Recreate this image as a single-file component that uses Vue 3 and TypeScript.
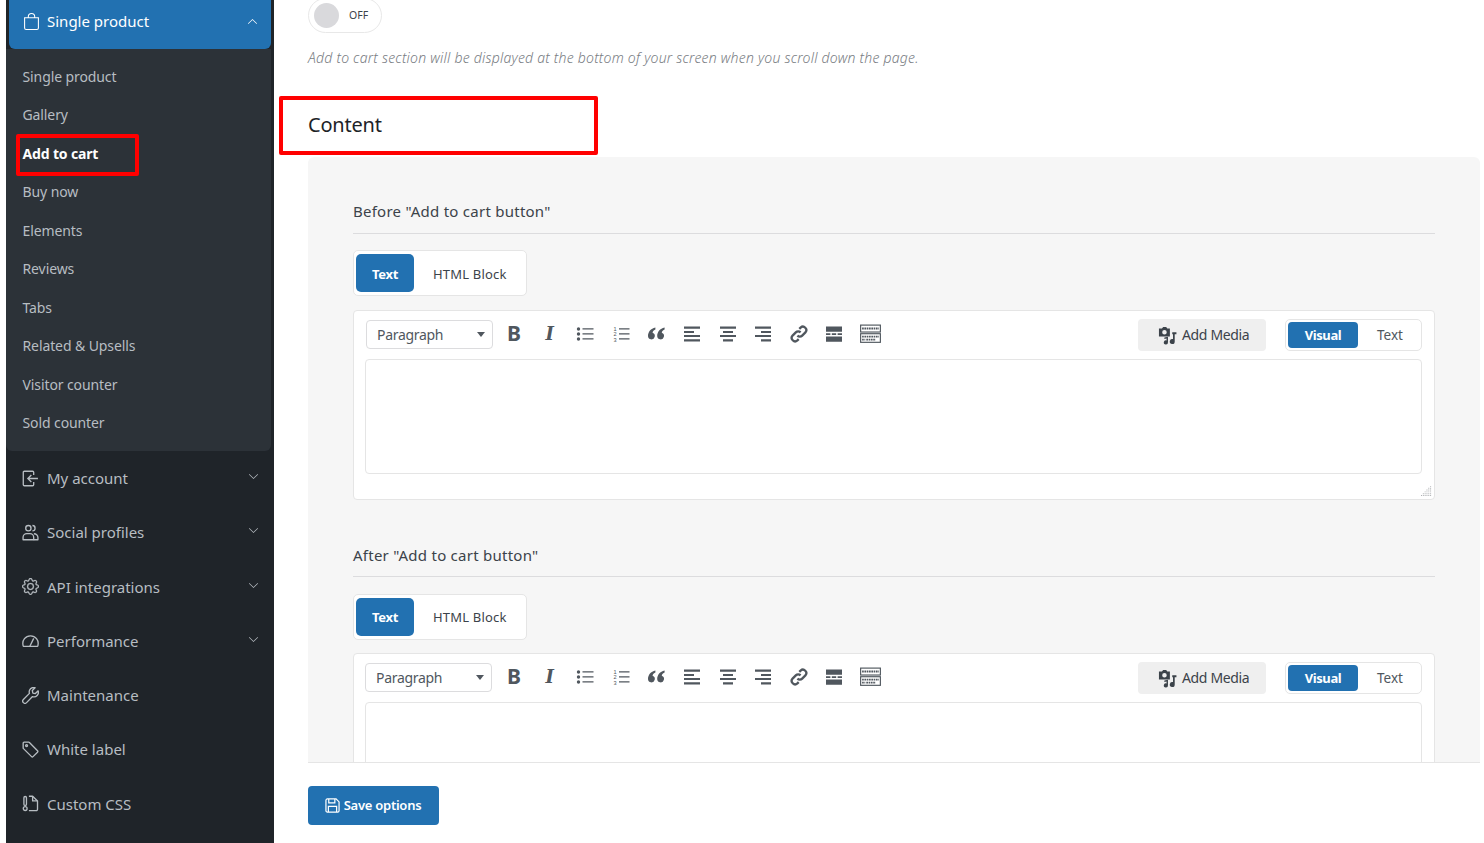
<script setup lang="ts">
const subItems = ['Single product', 'Gallery', 'Add to cart', 'Buy now', 'Elements', 'Reviews', 'Tabs', 'Related & Upsells', 'Visitor counter', 'Sold counter']
const mainItems = [
  { label: 'My account', icon: 'account', chevron: true },
  { label: 'Social profiles', icon: 'people', chevron: true },
  { label: 'API integrations', icon: 'gear', chevron: true },
  { label: 'Performance', icon: 'speed', chevron: true },
  { label: 'Maintenance', icon: 'wrench', chevron: false },
  { label: 'White label', icon: 'tag', chevron: false },
  { label: 'Custom CSS', icon: 'css', chevron: false },
]
const sections = ['Before "Add to cart button"', 'After "Add to cart button"']
</script>

<template>
  <div class="page">
    <aside class="sidebar">
      <div class="head">
        <svg class="ico" viewBox="0 0 16 16" fill="currentColor"><path d="M8 1a2.5 2.5 0 0 1 2.5 2.5V4h-5v-.5A2.5 2.5 0 0 1 8 1zm3.5 3v-.5a3.5 3.5 0 1 0-7 0V4H1v10a2 2 0 0 0 2 2h10a2 2 0 0 0 2-2V4h-3.5zM2 5h12v9a1 1 0 0 1-1 1H3a1 1 0 0 1-1-1V5z" /></svg>
        <span class="head-label">Single product</span>
        <svg class="chev" viewBox="0 0 16 16" fill="currentColor"><path d="M7.646 4.646a.5.5 0 0 1 .708 0l6 6a.5.5 0 0 1-.708.708L8 5.707l-5.646 5.647a.5.5 0 0 1-.708-.708l6-6z" /></svg>
      </div>
      <ul class="sub">
        <li v-for="s in subItems" :key="s" :class="{ active: s === 'Add to cart' }">{{ s }}</li>
      </ul>
      <div v-for="m in mainItems" :key="m.label" class="item">
        <svg v-if="m.icon === 'account'" class="ico" viewBox="0 0 16 16" fill="none" stroke="currentColor" stroke-width="1.25"><path d="M11 4.6V2.2a1 1 0 0 0-1-1H2.2a1 1 0 0 0-1 1v11.6a1 1 0 0 0 1 1H10a1 1 0 0 0 1-1v-2.4" /><path d="M15 8H5.5M8.8 4.7 5.5 8l3.3 3.3" /></svg>
        <svg v-else-if="m.icon === 'people'" class="ico" viewBox="0 0 16 16" fill="none" stroke="currentColor" stroke-width="1.25" stroke-linejoin="round"><circle cx="6" cy="3.9" r="2.5" /><path d="M9.8 1.4a2.5 2.5 0 1 1 0 5" /><path d="M1 14.8v-2.3A3.5 3.5 0 0 1 4.5 9h3a3.5 3.5 0 0 1 3.5 3.5v2.3z" /><path d="M11.2 9.2A3.6 3.6 0 0 1 15 12.7v2.1h-4" /></svg>
        <svg v-else-if="m.icon === 'gear'" class="ico" viewBox="0 0 16 16" fill="currentColor" stroke="currentColor" stroke-width=".2"><path d="M8 4.754a3.246 3.246 0 1 0 0 6.492 3.246 3.246 0 0 0 0-6.492zM5.754 8a2.246 2.246 0 1 1 4.492 0 2.246 2.246 0 0 1-4.492 0z" /><path d="M9.796 1.343c-.527-1.79-3.065-1.79-3.592 0l-.094.319a.873.873 0 0 1-1.255.52l-.292-.16c-1.64-.892-3.433.902-2.54 2.541l.159.292a.873.873 0 0 1-.52 1.255l-.319.094c-1.79.527-1.79 3.065 0 3.592l.319.094a.873.873 0 0 1 .52 1.255l-.16.292c-.892 1.64.901 3.434 2.541 2.54l.292-.159a.873.873 0 0 1 1.255.52l.094.319c.527 1.79 3.065 1.79 3.592 0l.094-.319a.873.873 0 0 1 1.255-.52l.292.16c1.64.893 3.434-.902 2.54-2.541l-.159-.292a.873.873 0 0 1 .52-1.255l.319-.094c1.79-.527 1.79-3.065 0-3.592l-.319-.094a.873.873 0 0 1-.52-1.255l.16-.292c.893-1.64-.902-3.433-2.541-2.54l-.292.159a.873.873 0 0 1-1.255-.52l-.094-.319zm-2.633.283c.246-.835 1.428-.835 1.674 0l.094.319a1.873 1.873 0 0 0 2.693 1.115l.291-.16c.764-.415 1.6.42 1.184 1.185l-.159.292a1.873 1.873 0 0 0 1.116 2.692l.318.094c.835.246.835 1.428 0 1.674l-.319.094a1.873 1.873 0 0 0-1.115 2.693l.16.291c.415.764-.42 1.6-1.185 1.184l-.291-.159a1.873 1.873 0 0 0-2.693 1.116l-.094.318c-.246.835-1.428.835-1.674 0l-.094-.319a1.873 1.873 0 0 0-2.692-1.115l-.292.16c-.764.415-1.6-.42-1.184-1.185l.159-.291A1.873 1.873 0 0 0 1.945 8.93l-.319-.094c-.835-.246-.835-1.428 0-1.674l.319-.094A1.873 1.873 0 0 0 3.06 4.377l-.16-.292c-.415-.764.42-1.6 1.185-1.184l.292.159a1.873 1.873 0 0 0 2.692-1.115l.094-.319z" /></svg>
        <svg v-else-if="m.icon === 'speed'" class="ico" viewBox="0 0 16 16" fill="none" stroke="currentColor" stroke-width="1.25"><path d="M2 13.6h12a1 1 0 0 0 1-1.2A7.1 7.1 0 0 0 8 3.6a7.1 7.1 0 0 0-7 8.8 1 1 0 0 0 1 1.2z" /><path d="M7.4 13.4 11 6" /></svg>
        <svg v-else-if="m.icon === 'wrench'" class="ico" viewBox="0 0 16 16" fill="none" stroke="currentColor" stroke-width="1.25" stroke-linejoin="round"><path d="M15.2 3.6 12.6 6.2l-2.4-.5-.5-2.4 2.6-2.6a4.2 4.2 0 0 0-5.3 5.3L1.3 11.7a2.1 2.1 0 1 0 3 3L9.9 9a4.2 4.2 0 0 0 5.3-5.4z" /></svg>
        <svg v-else-if="m.icon === 'tag'" class="ico" viewBox="0 0 16 16" fill="none" stroke="currentColor" stroke-width="1.25" stroke-linejoin="round"><path d="M1.1 2.2v4.3a1 1 0 0 0 .3.7l7.6 7.5a1 1 0 0 0 1.4 0l4.2-4.2a1 1 0 0 0 0-1.4L7 1.4a1 1 0 0 0-.7-.3H2.2a1 1 0 0 0-1.1 1.1z" /><circle cx="4.3" cy="4.3" r=".9" /></svg>
        <svg v-else class="ico" viewBox="0 0 16 16" fill="none" stroke="currentColor" stroke-width="1.25" stroke-linejoin="round"><path d="M6.5 1.2H10l4.6 4.4v7.9a1.2 1.2 0 0 1-1.2 1.2H6.5" /><path d="M10 1.2v4.4h4.6" /><rect x="1.8" y="1.4" width="2.4" height="8.4" rx="1.2" /><circle cx="3" cy="12.8" r="1.8" /></svg>
        <span class="label">{{ m.label }}</span>
        <svg v-if="m.chevron" class="chev" viewBox="0 0 16 16" fill="currentColor"><path d="M1.646 4.646a.5.5 0 0 1 .708 0L8 10.293l5.646-5.647a.5.5 0 0 1 .708.708l-6 6a.5.5 0 0 1-.708 0l-6-6a.5.5 0 0 1 0-.708z" /></svg>
      </div>
      <div class="mark mark-side"></div>
    </aside>

    <main class="main">
      <div class="toggle"><span class="knob"></span><span class="off">OFF</span></div>
      <p class="desc">Add to cart section will be displayed at the bottom of your screen when you scroll down the page.</p>
      <h2 class="title">Content</h2>
      <div class="panel">
        <section v-for="sec in sections" :key="sec" class="sec">
          <h3 class="sec-title">{{ sec }}</h3>
          <div class="tabs">
            <span class="tab on">Text</span>
            <span class="tab">HTML Block</span>
          </div>
          <div class="editor">
            <div class="bar">
              <div class="select"><span>Paragraph</span><i class="caret"></i></div>
              <span class="t-b tool">B</span>
              <span class="t-i tool">I</span>
              <svg class="tool" viewBox="0 0 20 20" fill="#50575e"><circle cx="3.5" cy="5" r="1.7" /><circle cx="3.5" cy="10" r="1.7" /><circle cx="3.5" cy="15" r="1.7" /><path d="M7.5 4.3h11v1.3h-11zM7.5 9.3h11v1.3h-11zM7.5 14.3h11v1.3h-11z" /></svg>
              <svg class="tool" viewBox="0 0 20 20" fill="#50575e"><path d="M8 4.3h10.5v1.3H8zM8 9.3h10.5v1.3H8zM8 14.3h10.5v1.3H8z" /><text x="2.6" y="7.4" font-size="5.6" font-family="Liberation Sans">1</text><text x="2.4" y="12.4" font-size="5.6" font-family="Liberation Sans">2</text><text x="2.4" y="17.6" font-size="5.6" font-family="Liberation Sans">3</text></svg>
              <svg class="tool" viewBox="0 0 20 20" fill="#50575e"><path d="M9.4 3.4v2C7.4 6.2 6.6 7.5 6.6 8.8a3.4 3.4 0 1 1-4.6 3.2C2 7.8 4.8 4.4 9.4 3.4zM18.6 3.4v2c-2 .8-2.8 2.1-2.8 3.4a3.4 3.4 0 1 1-4.6 3.2c0-4.2 2.8-7.6 7.4-8.6z" /></svg>
              <svg class="tool" viewBox="0 0 20 20" fill="#50575e"><path d="M2 2.5h16v2.2H2zM2 7h10v2H2zM2 11h16v2H2zM2 15.3h16v2.2H2z" /></svg>
              <svg class="tool" viewBox="0 0 20 20" fill="#50575e"><path d="M2 2.5h16v2.2H2zM5 7h10v2H5zM2 11h16v2H2zM5 15.3h10v2.2H5z" /></svg>
              <svg class="tool" viewBox="0 0 20 20" fill="#50575e"><path d="M2 2.5h16v2.2H2zM8 7h10v2H8zM2 11h16v2H2zM8 15.3h10v2.2H8z" /></svg>
              <svg class="tool" viewBox="0 0 20 20" fill="none" stroke="#50575e" stroke-width="2.3"><path d="M8.4 11.6a3.4 3.4 0 0 0 4.8 0l3.2-3.2a3.4 3.4 0 0 0-4.8-4.8l-1.3 1.3" /><path d="M11.6 8.4a3.4 3.4 0 0 0-4.8 0l-3.2 3.2a3.4 3.4 0 0 0 4.8 4.8l1.3-1.3" /></svg>
              <svg class="tool" viewBox="0 0 20 20" fill="#50575e"><path d="M2 2.5h16v5.2H2zM2 9.3h4.4v1.6H2zM7.8 9.3h4.4v1.6H7.8zM13.6 9.3H18v1.6h-4.4zM2 12.5h16v5.2H2z" /></svg>
              <svg class="tool sink" viewBox="0 0 20 20" fill="none" stroke="#50575e" stroke-width="1.1"><rect x="0.6" y="2" width="18.8" height="6.6" /><rect x="0.6" y="10.2" width="18.8" height="8.2" /><path d="M2 5.2h16M2 13h16M2 15.8h3M6 15.8h9" stroke-width="1.8" stroke-dasharray="1.6 .6" /></svg>
              <div class="spacer"></div>
              <div class="media">
                <svg class="media-ico" viewBox="0 0 20 20" fill="#3c434a"><path d="M1 2.5h3.2L5.4 1h3.2l1.2 1.5h2.7V11H1zM6.8 4.2a2.4 2.4 0 1 0 0 4.8 2.4 2.4 0 0 0 0-4.8z" /><path d="M15 6.5h4.4v2.2h-1.8v7.5a2.6 2.6 0 1 1-1.8-2.4V8.7H15zM6.7 12l3.8-.8v6a2.2 2.2 0 1 1-1.5-2v-2l-2.3.5z" /></svg>
                <span class="media-label">Add Media</span>
              </div>
              <div class="mode">
                <span class="mode-btn on">Visual</span>
                <span class="mode-btn">Text</span>
              </div>
            </div>
            <div class="area"></div>
            <div class="foot"><svg class="grip" viewBox="0 0 12 12" fill="#a7aaad"><path d="M10 1h1v1h-1zM10 3h1v1h-1zM8 3h1v1H8zM10 5h1v1h-1zM8 5h1v1H8zM6 5h1v1H6zM10 7h1v1h-1zM8 7h1v1H8zM6 7h1v1H6zM4 7h1v1H4zM10 9h1v1h-1zM8 9h1v1H8zM6 9h1v1H6zM4 9h1v1H4zM2 9h1v1H2zM10 11h1v1h-1zM8 11h1v1H8zM6 11h1v1H6zM4 11h1v1H4zM2 11h1v1H2zM0 11h1v1H0z" /></svg></div>
          </div>
        </section>
      </div>
      <div class="actions">
        <button class="save" type="button">
          <svg class="save-ico" viewBox="0 0 16 16" fill="none" stroke="currentColor" stroke-width="1.3"><path d="M1 2.5A1.5 1.5 0 0 1 2.5 1h9.3L15 4.2v9.3a1.5 1.5 0 0 1-1.5 1.5h-11A1.5 1.5 0 0 1 1 13.5z" /><path d="M4 1v4.2h6.5V1M3.6 15V9h8.800v6" /></svg>
          <span class="save-label">Save options</span>
        </button>
      </div>
      <div class="mark mark-main"></div>
    </main>
  </div>
</template>

<style scoped>
.page { display: flex; height: 843px; overflow: hidden; background: #fff; font-family: "Noto Sans", "Open Sans", sans-serif; color: #3c434a; position: relative; }
.sidebar { width: 268px; margin-left: 6px; flex: none; background: #1f2429; color: #b7bdc2; position: relative; }
.head { height: 49px; margin: 0 3px; padding: 0 13px 7px 14px; box-sizing: border-box; display: flex; align-items: center; background: #2271b1; color: #fff; border-radius: 0 0 6px 6px; font-size: 15px; }
.ico { width: 17px; height: 17px; flex: none; }
.head-label { margin-left: 7px; }
.label { margin-left: 8px; }
.chev { width: 11px; height: 11px; margin-left: auto; }
.sub { list-style: none; margin: 0 3px 0 0; padding: 8.5px 0 8.5px 16.5px; background: #2c3238; border-radius: 0 0 6px 6px; font-size: 14px; letter-spacing: -.1px; }
.sub li { height: 38.5px; line-height: 38.5px; }
.sub li.active { color: #fff; font-weight: 700; letter-spacing: -.15px; }
.item { height: 54.25px; display: flex; align-items: center; padding: 0 15px 0 16px; font-size: 15px; box-sizing: border-box; }
.item .chev { margin-top: -3px; }
.mark { position: absolute; border: 4px solid #f00; border-radius: 2px; box-sizing: border-box; pointer-events: none; }
.mark-side { left: 10px; top: 134px; width: 123px; height: 42px; }
.main { flex: 1; min-width: 0; padding: 0 4px 0 34px; display: flex; flex-direction: column; position: relative; }
.toggle { margin-top: -2px; width: 74px; height: 35px; flex: none; box-sizing: border-box; border: 1px solid #e8e8e8; border-radius: 18px; display: flex; align-items: center; padding-left: 5px; gap: 10px; }
.knob { width: 25px; height: 25px; border-radius: 50%; background: #d9d9dc; }
.off { font-size: 10.5px; line-height: 1; margin-top: -1px; color: #3c434a; }
.desc { margin: 15px 0 0; height: 20px; line-height: 20px; font-size: 14px; font-style: italic; font-weight: 300; color: #787c82; letter-spacing: .23px; }
.title { margin: 0; height: 89px; padding-top: 40px; line-height: 34px; font-size: 20px; font-weight: 400; color: #1d2327; box-sizing: border-box; flex: none; letter-spacing: -.2px; }
.panel { flex: 1; min-height: 0; overflow: hidden; background: #f6f6f6; border-bottom: 1px solid #e5e5e5; border-radius: 6px 6px 0 0; padding: 43px 45px 0; }
.sec { margin-bottom: 43px; }
.sec-title { margin: 0 0 16px; height: 34px; line-height: 22px; font-size: 15px; font-weight: 400; color: #3c434a; border-bottom: 1px solid #dcdcde; box-sizing: border-box; letter-spacing: .25px; }
.sec + .sec .sec-title { line-height: 24px; margin-bottom: 17px; }
.sec + .sec .editor { margin-top: 13px; }
.sec + .sec .select { margin-left: -1px; margin-right: 1px; }
.sec + .sec .tab { padding-top: 0; }
.tabs { display: inline-flex; vertical-align: top; height: 46px; box-sizing: border-box; background: #fff; border: 1px solid #e5e5e5; border-radius: 5px; padding: 3px 2px; font-size: 13px; }
.tab { display: flex; align-items: center; justify-content: center; padding: 2px 17px 0 18px; letter-spacing: .2px; }
.tab.on { width: 58px; padding: 2px 0 0; box-sizing: border-box; background: #2271b1; color: #fff; font-weight: 700; border-radius: 5px; margin-right: 1px; letter-spacing: -.3px; }
.editor { margin-top: 14px; background: #fff; border: 1px solid #e5e5e5; border-radius: 4px; padding: 0 12px; height: 190px; box-sizing: border-box; }
.bar { height: 48px; display: flex; align-items: center; }
.select { width: 127px; height: 29px; margin-top: -1px; box-sizing: border-box; border: 1px solid #dcdcde; border-radius: 4px; display: flex; align-items: center; justify-content: space-between; padding: 0 7px 0 10px; font-size: 14px; letter-spacing: -.3px; color: #50575e; }
.caret { width: 0; height: 0; border: 4px solid transparent; border-top: 5px solid #50575e; border-bottom: 0; }
.tool { width: 20px; height: 20px; margin-left: 15.6px; margin-top: -3px; flex: none; }
.sink { width: 21px; height: 21px; }
.select + .tool { margin-left: 11px; }
.t-b, .t-i { display: flex; align-items: center; justify-content: center; color: #50575e; font-size: 21px; font-weight: 700; line-height: 1; }
.t-i { font-family: "DejaVu Serif", serif; font-style: italic; font-size: 18px; }
.spacer { flex: 1; }
.media { width: 128px; height: 32px; padding-left: 20px; box-sizing: border-box; background: #efefef; border-radius: 4px; display: flex; align-items: center; gap: 5px; font-size: 14px; letter-spacing: -.35px; }
.media-label { margin-top: -1px; }
.media-ico { width: 19px; height: 19px; }
.mode { margin-left: 19px; width: 137px; height: 32px; box-sizing: border-box; border: 1px solid #e5e5e5; border-radius: 5px; padding: 2px; display: flex; align-items: stretch; font-size: 13px; }
.mode-btn { flex: 1; display: flex; align-items: center; justify-content: center; color: #50575e; font-size: 13.5px; padding-left: 3px; }
.mode-btn.on { flex: none; width: 70px; padding: 0; background: #2271b1; color: #fff; font-size: 13px; font-weight: 700; border-radius: 4px; letter-spacing: -.4px; }
.area { height: 115px; background: #fff; border: 1px solid #e5e5e5; border-radius: 4px; box-sizing: border-box; margin-left: -1px; }
.foot { height: 25px; position: relative; }
.grip { position: absolute; right: -10px; bottom: 3px; width: 11px; height: 11px; }
.actions { height: 80px; flex: none; padding-top: 23px; box-sizing: border-box; }
.save { width: 131px; height: 39px; border: 0; border-radius: 4px; background: #2271b1; color: #fff; display: flex; align-items: center; justify-content: center; gap: 4px; font-family: inherit; font-size: 13px; font-weight: 600; letter-spacing: -.25px; padding: 0 1px 0 0; }
.save-label { margin-top: -2px; }
.save-ico { width: 15px; height: 15px; }
.mark-main { left: 5px; top: 96px; width: 319px; height: 59px; }
</style>
